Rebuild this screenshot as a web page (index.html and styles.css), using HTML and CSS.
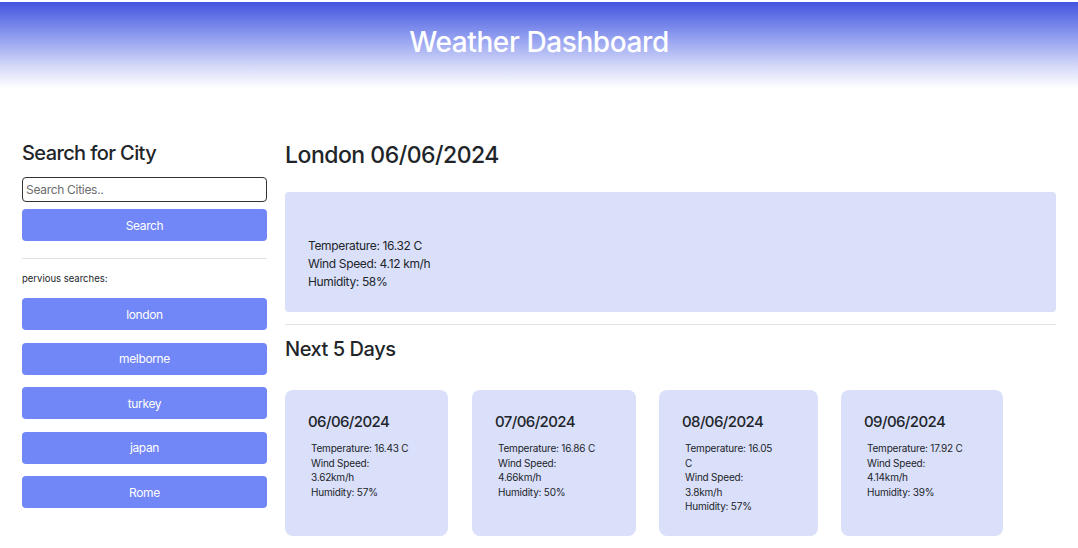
FILE: index.html
```html
<!DOCTYPE html>
<html lang="en">
<head>
<meta charset="utf-8">
<title>Weather Dashboard</title>
<link rel="stylesheet" href="styles.css">
</head>
<body>
<header class="hero">
  <h1 class="hero-title">Weather Dashboard</h1>
</header>
<main class="layout">
  <aside class="sidebar">
    <h2 class="side-title">Search for City</h2>
    <input class="search-input" type="text" placeholder="Search Cities..">
    <button class="btn btn-search">Search</button>
    <hr class="rule">
    <p class="history-label">pervious searches:</p>
    <div class="history">
      <button class="btn">london</button>
      <button class="btn">melborne</button>
      <button class="btn">turkey</button>
      <button class="btn">japan</button>
      <button class="btn">Rome</button>
    </div>
  </aside>
  <section class="content">
    <h2 class="city-title">London 06/06/2024</h2>
    <div class="today">
      <p>Temperature: 16.32 C</p>
      <p>Wind Speed: 4.12 km/h</p>
      <p>Humidity: 58%</p>
    </div>
    <hr class="rule rule-wide">
    <h3 class="forecast-title">Next 5 Days</h3>
    <div class="forecast">
      <div class="card card-1">
        <h4 class="card-date">06/06/2024</h4>
        <p>Temperature: 16.43 C</p>
        <p>Wind Speed: 3.62km/h</p>
        <p>Humidity: 57%</p>
      </div>
      <div class="card card-2">
        <h4 class="card-date">07/06/2024</h4>
        <p>Temperature: 16.86 C</p>
        <p>Wind Speed: 4.66km/h</p>
        <p>Humidity: 50%</p>
      </div>
      <div class="card card-3">
        <h4 class="card-date">08/06/2024</h4>
        <p>Temperature: 16.05 C</p>
        <p>Wind Speed: 3.8km/h</p>
        <p>Humidity: 57%</p>
      </div>
      <div class="card card-4">
        <h4 class="card-date">09/06/2024</h4>
        <p>Temperature: 17.92 C</p>
        <p>Wind Speed: 4.14km/h</p>
        <p>Humidity: 39%</p>
      </div>
    </div>
  </section>
</main>
</body>
</html>
```
FILE: styles.css
```css
* { box-sizing: border-box; }
html, body { margin: 0; padding: 0; background: #fff; }
body {
  font-family: Inter, "Noto Sans", sans-serif;
  color: #212529;
  overflow: hidden;
  height: 548px;
}
.hero {
  margin-top: 2px;
  height: 86px;
  background: linear-gradient(to bottom, #4354e0 0%, #8f9cef 40%, #d4d9f8 75%, #ffffff 100%);
  display: flex;
  justify-content: center;
  padding-top: 24px;
}
.hero-title {
  margin: 0;
  font-size: 28px;
  font-weight: 500;
  line-height: 32px;
  color: #fff;
  letter-spacing: -0.4px;
}
.layout {
  display: flex;
  gap: 18px;
  padding: 52px 22px 0 22px;
}
.sidebar {
  width: 245px;
  flex: none;
  display: flex;
  flex-direction: column;
}
.side-title {
  margin: 0;
  font-size: 20px;
  font-weight: 500;
  line-height: 24px;
  height: 24px;
  margin-top: 1px;
  letter-spacing: -0.6px;
}
.search-input {
  margin-top: 12px;
  height: 25px;
  border: 1px solid #333;
  border-radius: 4px;
  padding: 0 3px;
  font-family: inherit;
  font-size: 12px;
  letter-spacing: -0.3px;
  color: #212529;
  outline: none;
}
.search-input::placeholder { color: #6c6c6c; }
.btn {
  display: block;
  width: 100%;
  height: 32px;
  border: none;
  border-radius: 4px;
  background: #7186f7;
  color: #fff;
  font-family: inherit;
  font-size: 12px;
  letter-spacing: -0.35px;
  padding: 0;
}
.btn-search { margin-top: 7px; }
.rule {
  border: none;
  border-top: 1px solid #e2e2e2;
  margin: 17px 0 0 0;
  height: 0;
}
.history-label {
  margin: 14px 0 0 0;
  font-size: 9.5px;
  line-height: 12px;
}
.history {
  margin-top: 13px;
  display: flex;
  flex-direction: column;
  gap: 12.5px;
}
.content {
  width: 771px;
  flex: none;
  display: flex;
  flex-direction: column;
}
.city-title {
  margin: 0;
  font-size: 23px;
  font-weight: 500;
  line-height: 30px;
  letter-spacing: -0.5px;
}
.today {
  margin-top: 22px;
  height: 120px;
  background: #dadffa;
  border-radius: 4px;
  padding: 45px 23px 0 23px;
  font-size: 12px;
  line-height: 18px;
  letter-spacing: -0.35px;
}
.today p, .card p { margin: 0; }
.rule-wide { margin-top: 12px; }
.forecast-title {
  margin: 12px 0 0 0;
  font-size: 20px;
  font-weight: 500;
  line-height: 24px;
  letter-spacing: -0.45px;
}
.forecast {
  margin-top: 29px;
  display: flex;
  align-items: stretch;
  gap: 23px;
}
.card {
  background: #dadffa;
  border-radius: 8px;
  padding: 22px 0 23px 23px;
  height: 146px;
}
.card p {
  font-size: 10px;
  line-height: 14.5px;
  padding-left: 3px;
  letter-spacing: -0.2px;
}
.card-date {
  margin: 0 0 9px 0;
  font-size: 15px;
  font-weight: 500;
  line-height: 20px;
  letter-spacing: -0.6px;
}
.card-1 { width: 163px; padding-right: 37px; margin-right: 1px; }
.card-2 { width: 164px; padding-right: 38px; }
.card-3 { width: 159px; padding-right: 39px; }
.card-4 { width: 162px; padding-right: 36px; }
```
